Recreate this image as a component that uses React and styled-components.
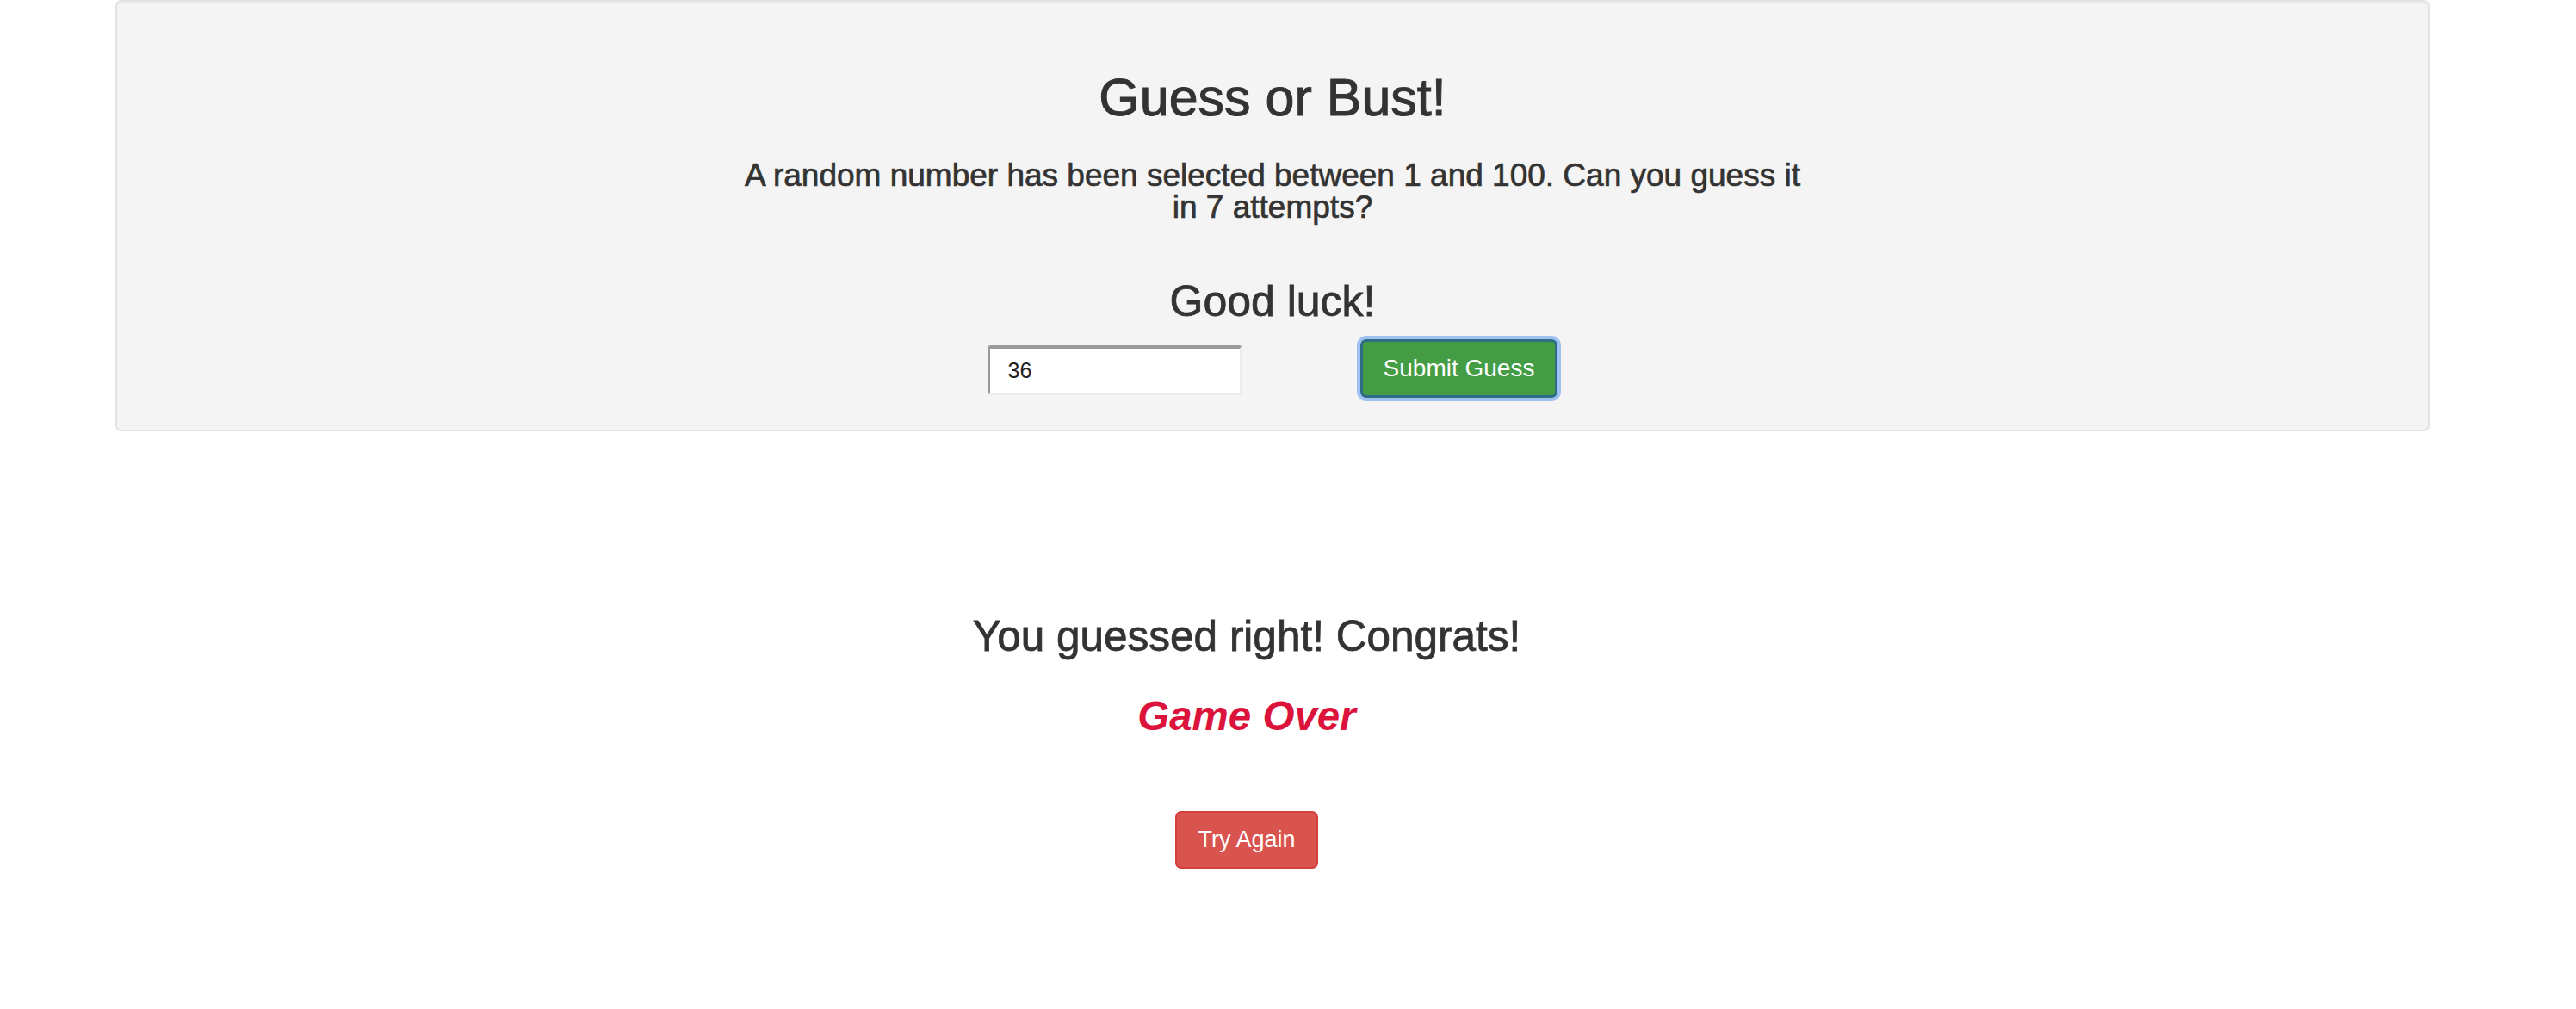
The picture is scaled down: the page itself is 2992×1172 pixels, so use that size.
import React from "react";
import styled, { createGlobalStyle } from "styled-components";

const GlobalStyle = createGlobalStyle`
  html, body {
    margin: 0;
    padding: 0;
    background: #ffffff;
  }
  body {
    font-family: "Liberation Sans", Arial, Helvetica, sans-serif;
    color: #333333;
  }
`;

const Page = styled.div`
  display: flex;
  flex-direction: column;
  align-items: stretch;
  width: 2992px;
`;

const Well = styled.section`
  margin: 0 170px 0 134px;
  padding: 77px 0 37px;
  background: #f4f4f4;
  border: 2px solid #e3e3e3;
  border-radius: 7px;
  box-shadow: inset 0 2px 2px rgba(0, 0, 0, 0.04);
  display: flex;
  flex-direction: column;
  align-items: center;
`;

const Title = styled.h1`
  margin: 0;
  font-size: 61px;
  line-height: 68px;
  font-weight: 400;
  color: #333;
  -webkit-text-stroke: 1px #333;
  text-align: center;
`;

const Lead = styled.h4`
  margin: 39px 0 0;
  max-width: 1250px;
  font-size: 37px;
  line-height: 36.5px;
  font-weight: 400;
  color: #333;
  -webkit-text-stroke: 0.7px #333;
  text-align: center;
`;

const SubHeading = styled.h2`
  margin: ${(p) => p.$top}px 0 0;
  font-size: ${(p) => p.$size}px;
  line-height: ${(p) => p.$lh}px;
  font-weight: 400;
  color: #333;
  -webkit-text-stroke: 0.8px #333;
  text-align: center;
`;

const GuessRow = styled.form`
  margin-top: 17px;
  display: flex;
  align-items: center;
  justify-content: center;
  gap: 137px;
`;

const GuessInput = styled.input`
  box-sizing: border-box;
  width: 296px;
  height: 58px;
  margin-top: 3px;
  padding: 0 0 0 21px;
  font-family: "Liberation Sans", Arial, sans-serif;
  font-size: 25px;
  color: #222;
  background: #ffffff;
  border-style: solid;
  border-width: 4px 3px 3px 3px;
  border-color: #9a9a9a #ececec #ececec #9a9a9a;
  border-radius: 4px;
  outline: none;
`;

const Button = styled.button`
  box-sizing: border-box;
  height: ${(p) => p.$h}px;
  padding: 0 ${(p) => p.$px}px;
  font-family: "Liberation Sans", Arial, sans-serif;
  font-size: ${(p) => p.$fs}px;
  color: #ffffff;
  background: ${(p) => p.$bg};
  border: ${(p) => p.$bw}px solid ${(p) => p.$border};
  border-radius: 7px;
  box-shadow: ${(p) => (p.$focus ? "0 0 0 4px rgba(128, 178, 242, 0.75)" : "none")};
  cursor: pointer;
`;

const Result = styled.div`
  margin: 211px 96px 0 0;
  display: flex;
  flex-direction: column;
  align-items: center;
`;

const GameOver = styled.h3`
  margin: 41px 0 0;
  font-size: 47.5px;
  line-height: 51px;
  font-weight: 700;
  font-style: italic;
  color: #dc143c;
  text-align: center;
`;

const RetryWrap = styled.div`
  margin-top: 85px;
  display: flex;
  justify-content: center;
`;

export default function App() {
  return (
    <>
      <GlobalStyle />
      <Page>
        <Well>
          <Title>Guess or Bust!</Title>
          <Lead>
            A random number has been selected between 1 and 100. Can you guess it in 7 attempts?
          </Lead>
          <SubHeading $top={64} $size={50} $lh={54}>
            Good luck!
          </SubHeading>
          <GuessRow onSubmit={(e) => e.preventDefault()}>
            <GuessInput type="text" defaultValue="36" />
            <Button
              type="submit"
              $h={68}
              $px={24}
              $fs={28}
              $bg="#449d44"
              $border="#2f6d86"
              $bw={3}
              $focus
            >
              Submit Guess
            </Button>
          </GuessRow>
        </Well>
        <Result>
          <SubHeading $top={0} $size={49.5} $lh={53}>
            You guessed right! Congrats!
          </SubHeading>
          <GameOver>Game Over</GameOver>
          <RetryWrap>
            <Button type="button" $h={67} $px={24} $fs={27} $bg="#d9534f" $border="#d43f3a" $bw={2}>
              Try Again
            </Button>
          </RetryWrap>
        </Result>
      </Page>
    </>
  );
}
